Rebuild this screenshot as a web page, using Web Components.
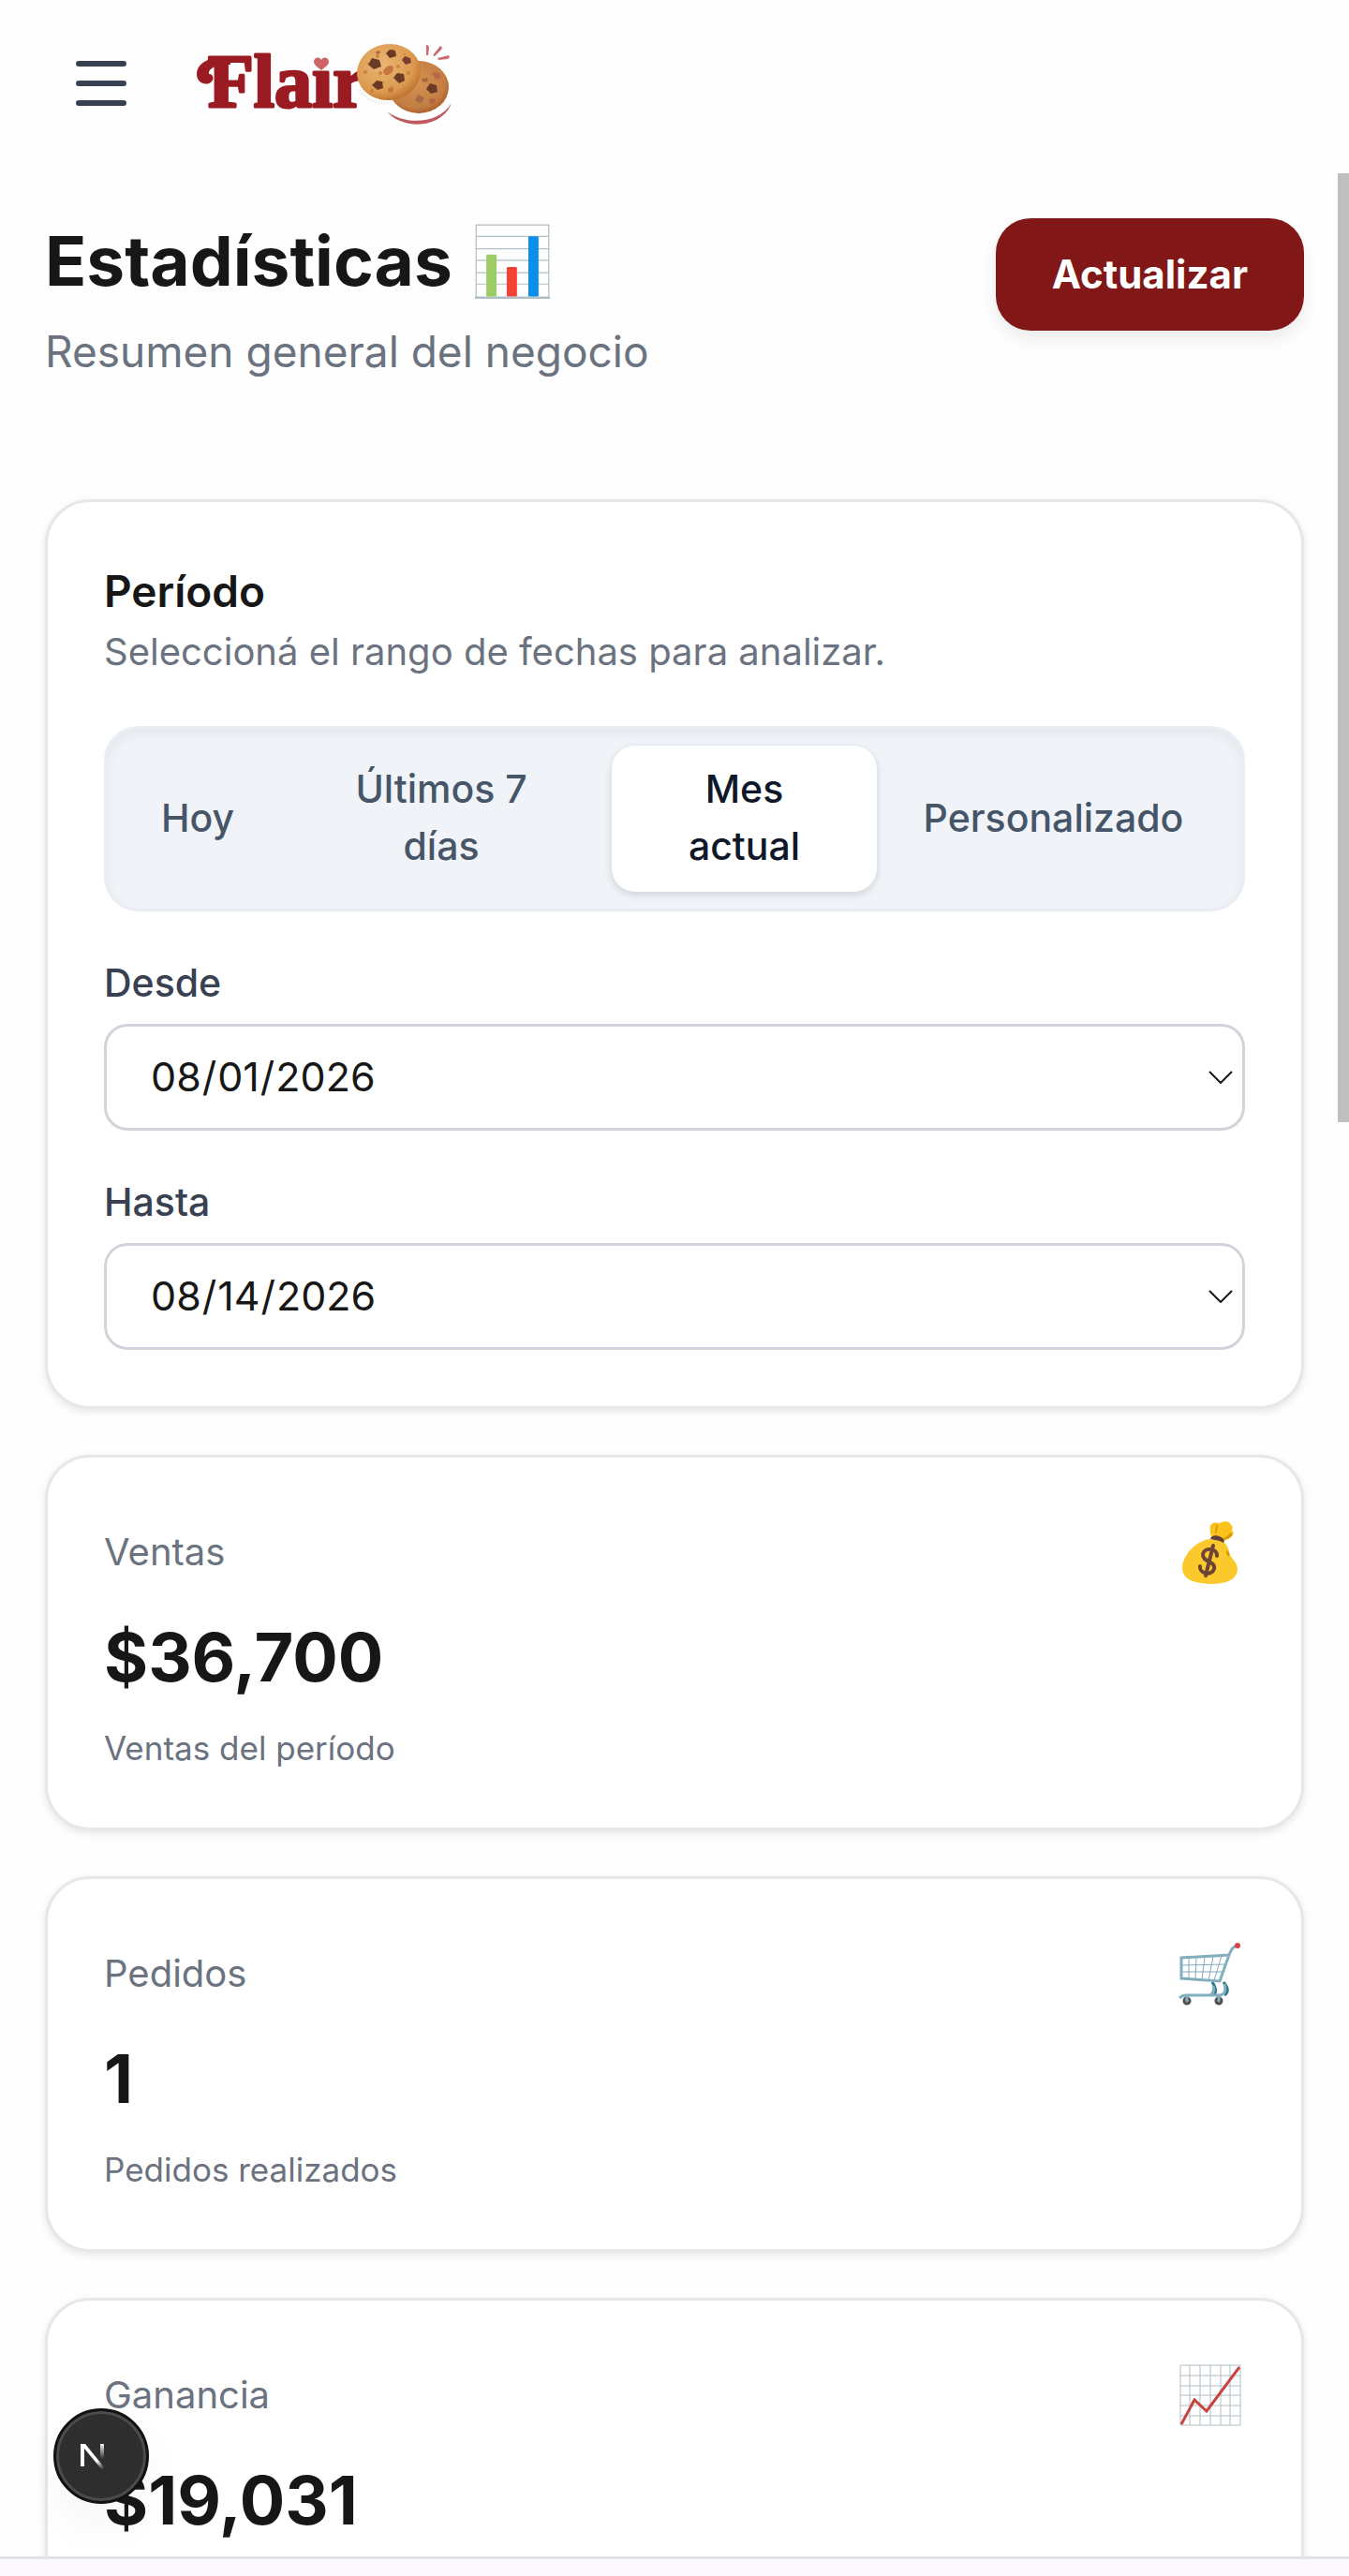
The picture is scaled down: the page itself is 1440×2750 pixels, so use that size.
<!DOCTYPE html>
<html lang="es">
<head>
<meta charset="utf-8">
<meta name="viewport" content="width=device-width, initial-scale=1">
<title>Flair - Estadísticas</title>
<style>
html, body {
  height: 100%;
  margin: 0;
}

body {
  background: #fefefe;
  color: #171717;
  font-family: Inter, "Liberation Sans", sans-serif;
}
</style>
</head>
<body>
<app-shell>
  <app-header slot="header"></app-header>

  <page-heading>
    Estadísticas
    <emoji-icon slot="icon" name="bars"></emoji-icon>
    <span slot="summary">Resumen general del negocio</span>
    <action-button slot="action">Actualizar</action-button>
  </page-heading>

  <card-panel>
    <period-filter heading="Período" hint="Seleccioná el rango de fechas para analizar.">
      <segmented-control options="Hoy|Últimos 7 días|Mes actual|Personalizado" selected="2"></segmented-control>
      <date-field label="Desde" value="2026-08-01"></date-field>
      <date-field label="Hasta" value="2026-08-14"></date-field>
    </period-filter>
  </card-panel>

  <card-panel>
    <stat-summary label="Ventas" value="$36,700" caption="Ventas del período" icon="money"></stat-summary>
  </card-panel>

  <card-panel>
    <stat-summary label="Pedidos" value="1" caption="Pedidos realizados" icon="cart"></stat-summary>
  </card-panel>

  <card-panel>
    <stat-summary label="Ganancia" value="$19,031" icon="trend"></stat-summary>
  </card-panel>

  <dev-badge slot="overlay"></dev-badge>
</app-shell>

<script>
class BaseElement extends HTMLElement {
  constructor() {
    super();

    this.shadow = this.attachShadow({ mode: "open" });
  }

  connectedCallback() {
    const tmpl = document.createElement("template");

    tmpl.innerHTML = `<style>
* { box-sizing: border-box; }
${this.styles()}
</style>
${this.template()}`;
    this.shadow.replaceChildren(tmpl.content.cloneNode(true));
  }
}

class AppShell extends BaseElement {
  template() {
    return `
<slot name="header"></slot>
<main>
  <div part="content"><slot></slot></div>
  <div part="thumb"></div>
</main>
<footer></footer>
<slot name="overlay"></slot>
`;
  }

  styles() {
    return `
:host {
  display: flex;
  flex-direction: column;
  height: 100vh;
  overflow: hidden;
  position: relative;
}

main {
  flex: 1;
  min-height: 0;
  overflow: hidden;
  position: relative;
}

[part="content"] {
  display: flex;
  flex-direction: column;
  gap: 49px;
  padding: 48px;
}

[part="thumb"] {
  background: #bfbfbf;
  height: 39.8%;
  position: absolute;
  right: 0;
  top: 0;
  width: 12px;
}

footer {
  background: #fbf9fd;
  border-top: 3px solid #e2e2e8;
  flex: none;
  height: 21px;
}
`;
  }
}

class AppHeader extends BaseElement {
  template() {
    return `
<header>
  <button type="button" aria-label="Menú">
    <svg width="54" height="48" viewBox="0 0 54 48" fill="none" stroke="#374151" stroke-width="6" stroke-linecap="round">
      <path d="M3 3h48M3 24h48M3 45h48"/>
    </svg>
  </button>
  <a href="#"><brand-logo></brand-logo></a>
</header>
`;
  }

  styles() {
    return `
:host {
  display: block;
  flex: none;
}

header {
  align-items: center;
  display: flex;
  gap: 70px;
  padding: 44px 48px 51px 81px;
}

button {
  background: none;
  border: 0;
  display: flex;
  padding: 0;
}

a {
  display: block;
  text-decoration: none;
}
`;
  }
}

class BrandLogo extends BaseElement {
  template() {
    return `
<svg width="285" height="90" viewBox="205 44 285 90">
  <defs>
    <radialGradient id="front" cx=".42" cy=".35" r=".7">
      <stop offset="0" stop-color="#e9b671"/>
      <stop offset=".7" stop-color="#dc9a50"/>
      <stop offset="1" stop-color="#b96a28"/>
    </radialGradient>
    <radialGradient id="back" cx=".45" cy=".4" r=".65">
      <stop offset="0" stop-color="#d39455"/>
      <stop offset=".75" stop-color="#c47d42"/>
      <stop offset="1" stop-color="#a45525"/>
    </radialGradient>
  </defs>
  <text x="222" y="114" font-family="Liberation Serif" font-weight="700" font-size="80" fill="#9b1b22" stroke="#9b1b22" stroke-width="3" stroke-linejoin="round">Flair</text>
  <path d="M246 60C222 60 210 68 210 79C210 87 217 91 223 89C229 87 229 79 223 79C222 73 230 69 246 69Z" fill="#9b1b22"/>
  <rect x="328" y="52" width="34" height="23" fill="#fefefe"/>
  <path d="M343 75C338 71 335 69 335 66C335 61 341 60 343 64C345 60 351 61 351 66C351 69 348 71 343 75Z" fill="#cc6468"/>
  <ellipse cx="447" cy="93" rx="32" ry="28" fill="url(#back)"/>
  <path d="M384 97C391 106 400 111 416 110" fill="none" stroke="#e8e2de" stroke-width="3" stroke-dasharray="1 2"/>
  <g fill="#6b3a27">
    <path d="M459 89l7 2 1 7-7 2-5-5z"/>
    <path d="M446 101l7 3-3 6-7-2z" fill="#a76a49"/>
    <path d="M461 77l8 1 2 5-6 2z" fill="#b96547"/>
    <path d="M458 106l6-1 1 4-6 2zM450 84l6-1 1 4-5 1z" fill="#b06440"/>
  </g>
  <ellipse cx="415" cy="77" rx="34" ry="30" transform="rotate(-8 415 77)" fill="url(#front)"/>
  <g fill="#c98341">
    <circle cx="403" cy="60" r="2"/><circle cx="390" cy="77" r="2"/><circle cx="406" cy="78" r="2"/>
    <circle cx="425" cy="71" r="2"/><circle cx="436" cy="78" r="2"/><circle cx="418" cy="94" r="2"/>
    <circle cx="397" cy="97" r="2"/><circle cx="419" cy="54" r="2"/><circle cx="440" cy="88" r="2"/>
    <circle cx="409" cy="88" r="1"/><circle cx="432" cy="58" r="1"/><circle cx="393" cy="68" r="1"/>
  </g>
  <g fill="#6b3a27">
    <path d="M397 62l8 2 2 7-8 3-6-5z"/>
    <path d="M416 53l6 1 1 6-7 2-4-5z"/>
    <path d="M432 60l6 2 1 5-6 2-4-5z" fill="#7d3d2b"/>
    <path d="M424 78l7 1 1 7-6 3-6-6z"/>
    <path d="M402 86l6 1 1 7-6 2-6-5z"/>
  </g>
  <path d="M411 73c3-4 9-4 9 0s-5 8-8 7-4-4-1-7zM414 94l6 1-1 4-5-1z" fill="#c9743f"/>
  <path d="M401 55l4-1 1 3-4 1z" fill="#b8643a"/>
  <path d="M455 48q3 0 3 3l-1 8h-2zM470 49q3 1 1 4l-7 7-2-1zM479 59q2 2-1 4l-10 1-1-2z" fill="#c96b70"/>
  <path d="M413 119C430 132 466 135 482 110C471 139 428 138 413 119Z" fill="#c05a61"/>
</svg>
`;
  }

  styles() {
    return `
:host,
svg {
  display: block;
}
`;
  }
}

class EmojiIcon extends BaseElement {
  // Paths share one 66 unit grid so that any icon scales with --icon-size
  #icons = {
    bars: `
<path d="M1 1h64v64H1z" fill="#fff" stroke="#b0bec5" stroke-width="1"/>
<path d="M1 11h64M1 22h64M1 32h64M1 43h64M1 53h64" stroke="#b0bec5" stroke-width="1"/>
<path d="M0 65h66" stroke="#b0bec5" stroke-width="2"/>
<rect x="10" y="27" width="9" height="37" rx="1" fill="#9ccc65"/>
<rect x="28" y="38" width="9" height="26" rx="1" fill="#f44336"/>
<rect x="47" y="11" width="9" height="53" rx="1" fill="#0c8fe8"/>`,
    money: `
<path d="M34 17C32 9 32 3 36 2C39 0 41 3 43 2C48-1 54 0 55 4C58 6 56 8 56 10C60 13 56 16 54 18C51 20 48 20 46 22Z" fill="#fcc21b"/>
<path d="M38 12c1-5 0-7 2-9 2 3 0 7-1 11zM47 18c4-1 6-5 8-6 3 3-1 5-2 6-2 1-4 1-6 2z" fill="#d69c08"/>
<path d="M32 19C19 21 4 34 3 49C3 61 12 66 33 67C51 67 61 62 62 52C62 43 56 41 54 36C52 27 49 21 42 20Z" fill="#fcc92c"/>
<path d="M50 31c3 1 4 4 3 7-2-1-4-4-3-7z" fill="#d69c08"/>
<path d="M33 19c1-5 9-5 14 0 1 1 1 3 0 4-5-3-9-3-14-4z" fill="#5d4037"/>
<path d="M40 37C41 29 27 27 25 35C24 44 39 42 37 51C34 59 21 56 22 48M36 26L28 58" fill="none" stroke="#6d4536" stroke-width="4" stroke-linecap="round"/>`,
    cart: `
<path d="M35 42q6 8 2 14M47 42q8 9 1 14" fill="none" stroke="#2f7889" stroke-width="3"/>
<path d="M2 16L53 13L43 41L2 38ZM2 24L50 23M2 31L46 31M10 16V38M18 16L17 39M27 15L24 39M36 15L31 40M45 14L37 40" fill="none" stroke="#82aab8" stroke-width="1"/>
<path d="M53 13L43 41L2 38V16L53 13C56 5 58 4 62 3M36 46Q38 53 33 56M48 44Q51 55 43 56H7Q3 56 0 59" fill="none" stroke="#82aebd" stroke-width="3"/>
<circle cx="62" cy="3" r="3" fill="#d94448"/>
<g fill="#90a4ae" stroke="#4e4e52" stroke-width="3"><circle cx="8" cy="62" r="3"/><circle cx="42" cy="62" r="3"/></g>
<path d="M8 57v5M42 57v5" stroke="#82aebd" stroke-width="3"/>`,
    trend: `
<path d="M1 1h64v64H1zM11 1v64M22 1v64M33 1v64M44 1v64M54 1v64M1 12h64M1 23h64M1 33h64M1 44h64M1 55h64" fill="#fff" stroke="#b0bec5" stroke-width="1"/>
<path d="M2 64L16 38L29 50L64 3" fill="none" stroke="#c8433f" stroke-width="3"/>`,
  };

  template() {
    return `<svg viewBox="0 0 66 66" aria-hidden="true">${this.#icons[this.getAttribute("name")]}</svg>`;
  }

  styles() {
    return `
:host {
  display: block;
  flex: none;
  height: var(--icon-size, 66px);
  width: var(--icon-size, 66px);
}

svg {
  display: block;
  height: 100%;
  overflow: visible;
  width: 100%;
}
`;
  }
}

class PageHeading extends BaseElement {
  template() {
    return `
<div part="text">
  <h1><span><slot></slot></span><slot name="icon"></slot></h1>
  <p><slot name="summary"></slot></p>
</div>
<slot name="action"></slot>
`;
  }

  styles() {
    return `
:host {
  --icon-size: 80px;

  align-items: flex-start;
  display: flex;
  justify-content: space-between;
  margin-bottom: 72px;
}

[part="text"] {
  display: grid;
  gap: 14px;
}

h1 {
  align-items: center;
  display: flex;
  font-size: 73px;
  font-weight: 700;
  gap: 24px;
  line-height: 92px;
  margin: 0;
}

p {
  color: #6b7280;
  font-size: 46px;
  line-height: 73px;
  margin: 0;
}
`;
  }
}

class ActionButton extends BaseElement {
  template() {
    return `<button type="button"><slot></slot></button>`;
  }

  styles() {
    return `
:host {
  display: block;
}

button {
  background: #821717;
  border: 0;
  border-radius: 37px;
  box-shadow: 0 9px 18px rgb(0 0 0 / 8%);
  color: #fff;
  font: inherit;
  font-size: 42px;
  font-weight: 700;
  line-height: 60px;
  padding: 30px 60px;
}
`;
  }
}

class CardPanel extends BaseElement {
  template() {
    return `<slot></slot>`;
  }

  styles() {
    return `
:host {
  background: #fff;
  border: 3px solid #e5e7eb;
  border-radius: 48px;
  box-shadow: 0 3px 9px rgb(0 0 0 / 10%);
  box-sizing: border-box;
  display: block;
  padding: 60px;
}
`;
  }
}

class PeriodFilter extends BaseElement {
  template() {
    return `
<header>
  <h2>${this.getAttribute("heading")}</h2>
  <p>${this.getAttribute("hint")}</p>
</header>
<slot></slot>
`;
  }

  styles() {
    return `
:host {
  display: grid;
  gap: 46px;
}

header {
  padding-bottom: 3px;
}

h2 {
  font-size: 46px;
  font-weight: 600;
  line-height: 70px;
  margin: 0;
}

p {
  color: #6b7280;
  font-size: 40px;
  line-height: 60px;
  margin: 0;
}
`;
  }
}

class SegmentedControl extends BaseElement {
  template() {
    const selected = Number(this.getAttribute("selected"));

    return this.getAttribute("options")
      .split("|")
      .map((option, i) => `<button type="button" aria-pressed="${i === selected}">${option}</button>`)
      .join("\n");
  }

  styles() {
    return `
:host {
  background: #f0f4f9;
  border: 3px solid #e9eef4;
  border-radius: 37px;
  box-shadow: inset 0 6px 12px rgb(0 0 0 / 5%);
  box-sizing: border-box;
  display: grid;
  gap: 5px;
  grid-template-columns: minmax(0, 157fr) minmax(0, 354fr) minmax(0, 283fr) minmax(0, 367fr);
  padding: 18px;
}

button {
  background: none;
  border: 0;
  border-radius: 25px;
  color: #475569;
  font: inherit;
  font-size: 41px;
  font-weight: 500;
  line-height: 61px;
  padding: 16px 40px 18px;
}

[aria-pressed="true"] {
  background: #fff;
  box-shadow: 0 3px 8px rgb(0 0 0 / 14%);
  color: #0f172a;
}
`;
  }
}

class DateField extends BaseElement {
  template() {
    return `
<label for="date">${this.getAttribute("label")}</label>
<div part="control">
  <input id="date" type="date" value="${this.getAttribute("value")}">
  <svg width="26" height="14" viewBox="0 0 26 14" fill="none" stroke="#171717" stroke-width="2" aria-hidden="true">
    <path d="M1 1l12 12L25 1"/>
  </svg>
</div>
`;
  }

  styles() {
    return `
:host {
  display: grid;
  gap: 13px;
}

label {
  color: #374151;
  font-size: 41px;
  font-weight: 500;
  line-height: 61px;
}

[part="control"] {
  display: grid;
  position: relative;
}

input {
  appearance: none;
  background: #fff;
  border: 3px solid #d1d5db;
  border-radius: 25px;
  color: #171717;
  font: inherit;
  font-size: 43px;
  height: 114px;
  padding: 0 46px 2px;
  width: 100%;
}

input::-webkit-datetime-edit-fields-wrapper,
input::-webkit-datetime-edit {
  padding: 0;
}

input::-webkit-calendar-picker-indicator {
  margin: 0;
  opacity: 0;
}

svg {
  pointer-events: none;
  position: absolute;
  right: 13px;
  top: calc(50% - 7px);
}
`;
  }
}

class StatSummary extends BaseElement {
  template() {
    return `
<header>
  <h2>${this.getAttribute("label")}</h2>
  <emoji-icon name="${this.getAttribute("icon")}"></emoji-icon>
</header>
<strong>${this.getAttribute("value")}</strong>
<p>${this.getAttribute("caption") || ""}</p>
`;
  }

  styles() {
    return `
:host {
  display: block;
}

header {
  align-items: center;
  display: flex;
  height: 81px;
  justify-content: space-between;
  padding-right: 4px;
}

h2 {
  color: #6b7280;
  font-size: 40px;
  font-weight: 400;
  line-height: 61px;
  margin: 0;
}

strong {
  display: block;
  font-size: 72px;
  font-weight: 700;
  line-height: 98px;
  margin: 23px 0 24px;
}

p {
  color: #6b7280;
  font-size: 35px;
  line-height: 49px;
  margin: 0;
  min-height: 49px;
}
`;
  }
}

class DevBadge extends BaseElement {
  template() {
    return `
<button type="button" aria-label="Next.js">
  <svg width="30" height="34" viewBox="0 0 30 34" fill="none" stroke-width="4">
    <defs>
      <linearGradient id="diagonal" gradientUnits="userSpaceOnUse" x1="14" y1="16" x2="26" y2="31">
        <stop offset=".4" stop-color="#fff"/>
        <stop offset="1" stop-color="#fff" stop-opacity="0"/>
      </linearGradient>
      <linearGradient id="stem" gradientUnits="userSpaceOnUse" x1="0" y1="3" x2="0" y2="20">
        <stop offset="0" stop-color="#fff"/>
        <stop offset="1" stop-color="#fff" stop-opacity="0"/>
      </linearGradient>
    </defs>
    <path d="M4 28V4" stroke="#fff"/>
    <path d="M2 4h5l21 26v3h-2z" fill="url(#diagonal)"/>
    <path d="M25 4v17" stroke="url(#stem)"/>
  </svg>
</button>
`;
  }

  styles() {
    return `
:host {
  bottom: 77px;
  left: 57px;
  position: absolute;
}

button {
  align-items: center;
  background: #2e2e2e;
  border: 3px solid #111;
  border-radius: 50%;
  box-shadow: inset 0 0 0 3px #4b4b4b, 0 24px 48px rgb(0 0 0 / 4%);
  display: flex;
  height: 102px;
  padding: 0 0 0 24px;
  width: 102px;
}
`;
  }
}

customElements.define("app-shell", AppShell);
customElements.define("app-header", AppHeader);
customElements.define("brand-logo", BrandLogo);
customElements.define("emoji-icon", EmojiIcon);
customElements.define("page-heading", PageHeading);
customElements.define("action-button", ActionButton);
customElements.define("card-panel", CardPanel);
customElements.define("period-filter", PeriodFilter);
customElements.define("segmented-control", SegmentedControl);
customElements.define("date-field", DateField);
customElements.define("stat-summary", StatSummary);
customElements.define("dev-badge", DevBadge);
</script>
</body>
</html>
